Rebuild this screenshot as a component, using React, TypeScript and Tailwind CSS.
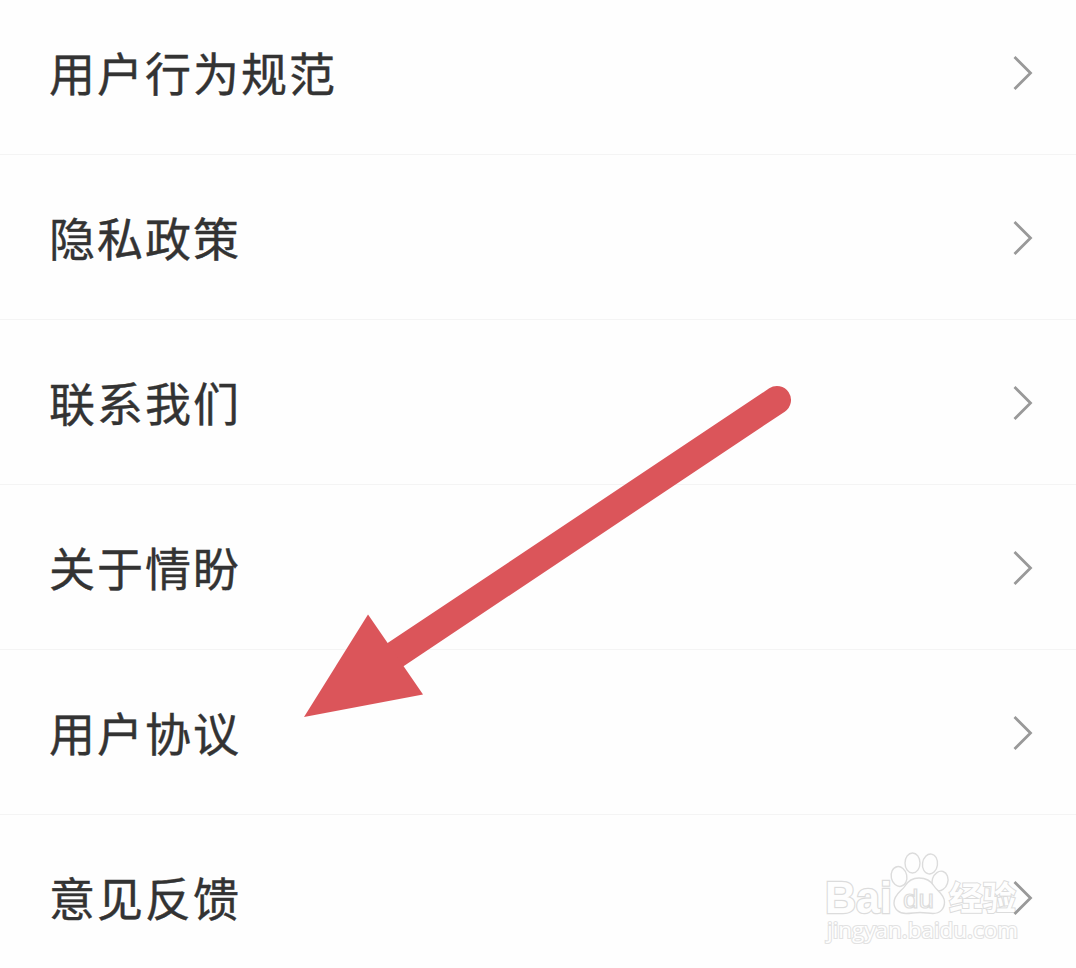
const MENU_ITEMS = [
  { id: 'conduct', label: '用户行为规范' },
  { id: 'privacy', label: '隐私政策' },
  { id: 'contact', label: '联系我们' },
  { id: 'about', label: '关于情盼' },
  { id: 'agreement', label: '用户协议' },
  { id: 'feedback', label: '意见反馈' },
];

export default function App() {
  return (
    <div className="relative h-[968px] w-[1076px] overflow-hidden bg-[#fefefe] font-['Noto_Sans_CJK_SC',sans-serif]">
      <Watermark />
      {/* The list is scrolled a little, so the first row is cut at the top */}
      <ul className="relative -mt-[10px]">
        {MENU_ITEMS.map((item) => (
          <MenuRow key={item.id} label={item.label} />
        ))}
      </ul>
      <Arrow />
    </div>
  );
}

function MenuRow({ label }: { label: string }) {
  return (
    <li className="flex h-[165px] items-center justify-between border-b border-[#f4f4f4] pr-[43px] pl-[49px]">
      <span className="pb-[2px] text-[46px] leading-[72px] tracking-[2px] text-[#333333] [-webkit-text-stroke:0.4px_#333333]">
        {label}
      </span>
      <Chevron />
    </li>
  );
}

function Chevron() {
  return (
    <svg width="20" height="36" viewBox="0 0 20 36" fill="none" className="mt-px">
      <path d="M1.5 2L17.5 18L1.5 34" stroke="#999999" strokeWidth="2.8" />
    </svg>
  );
}

// Red pointer towards the agreement row
function Arrow() {
  return (
    <svg width="1076" height="968" viewBox="0 0 1076 968" className="pointer-events-none absolute inset-0">
      <path d="M395 655L777 400" stroke="#db555a" strokeWidth="28" strokeLinecap="round" />
      <path d="M304 717L368 614.5L423 694.5Z" fill="#db555a" />
    </svg>
  );
}

function Watermark() {
  return (
    <svg
      width="230"
      height="110"
      viewBox="0 0 230 110"
      className="pointer-events-none absolute top-[840px] left-[816px]"
      fill="#fefefe"
      stroke="#dcdcdc"
      strokeWidth="1.4"
    >
      <ellipse cx="96.5" cy="23" rx="7.5" ry="10" />
      <ellipse cx="114" cy="24" rx="7.5" ry="10" transform="rotate(8 114 24)" />
      <ellipse cx="83" cy="36.5" rx="7.8" ry="10" transform="rotate(-12 83 36.5)" />
      <ellipse cx="124" cy="41" rx="7.8" ry="10" transform="rotate(18 124 41)" />
      <path d="M103 38C97 38 92 41 89 46C86 51 78 54 78 63C78 69 83 73.5 90 73.500C95 73.500 99 72.500 104 72.500C109 72.500 113 73.500 117 73.500C124 73.500 128.500 69 128.500 62C128.500 54 121 51 118 46C115 41 109 38 103 38Z" />
      <text
        x="9"
        y="73"
        fontSize="44"
        fontWeight="bold"
        fontFamily="'Liberation Sans', sans-serif"
        textLength="67"
        lengthAdjust="spacingAndGlyphs"
        paintOrder="stroke"
        strokeWidth="2.4"
      >
        Bai
      </text>
      <text
        x="87"
        y="68"
        fontSize="26"
        fontFamily="'Liberation Sans', sans-serif"
        textLength="31"
        lengthAdjust="spacingAndGlyphs"
        strokeWidth="1.2"
      >
        du
      </text>
      <text
        x="133"
        y="70"
        fontSize="33.5"
        fontWeight="bold"
        fontFamily="'Noto Sans CJK SC', sans-serif"
        paintOrder="stroke"
        strokeWidth="2"
      >
        经验
      </text>
      <text
        x="11"
        y="98"
        fontSize="22.5"
        fontFamily="'Open Sans', sans-serif"
        textLength="191"
        lengthAdjust="spacingAndGlyphs"
        paintOrder="stroke"
        stroke="#e2e2e2"
        strokeWidth="2.2"
      >
        jingyan.baidu.com
      </text>
    </svg>
  );
}
